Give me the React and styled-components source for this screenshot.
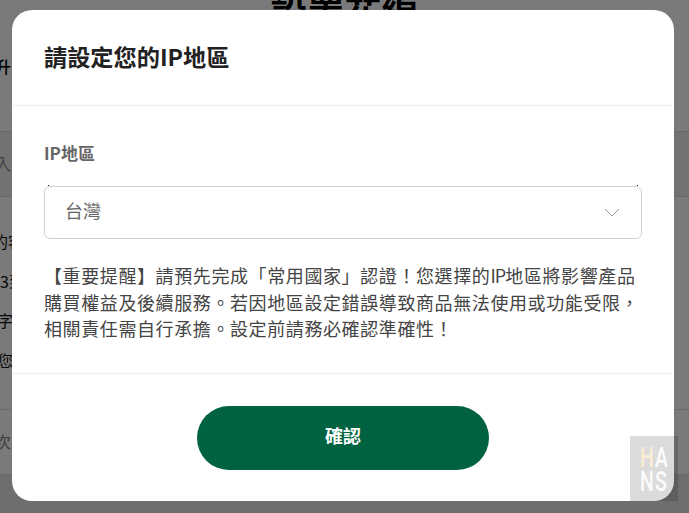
import React from 'react';
import styled, { createGlobalStyle } from 'styled-components';

const GlobalStyle = createGlobalStyle`
  html, body {
    margin: 0;
    padding: 0;
    background: #fff;
  }
  body {
    font-family: "Noto Sans CJK TC", "Liberation Sans", sans-serif;
  }
`;

const Screen = styled.div`
  position: relative;
  width: 689px;
  height: 513px;
  overflow: hidden;
`;

/* the settings page behind the dialog */
const PageBehind = styled.div`
  display: flex;
  flex-direction: column;
  background: #fff;
  height: 513px;
`;

const PageTitle = styled.h1`
  margin: -14px 0 0;
  height: 50px;
  font-size: 37px;
  line-height: 50px;
  font-weight: 700;
  text-align: center;
  color: #000;
`;

const PageHint = styled.div`
  margin-top: 17px;
  height: 26px;
  font-size: 16px;
  line-height: 26px;
  font-weight: 500;
  margin-left: ${(p) => p.$shift}px;
  color: #000;
`;

const PageField = styled.div`
  margin-top: ${(p) => p.$top}px;
  height: 64px;
  border-top: 1px solid #dcdcdc;
  border-bottom: 1px solid #dcdcdc;
  background: ${(p) => (p.$shade ? '#efefef' : '#fff')};
  font-size: 16px;
  line-height: 62px;
  color: #888;
  text-indent: -5px;
`;

const PageLines = styled.div`
  margin-top: 25px;
  display: flex;
  flex-direction: column;
`;

const PageLine = styled.div`
  height: 39.5px;
  font-size: 16px;
  line-height: 39.5px;
  margin-left: ${(p) => p.$shift}px;
  color: #111;
  white-space: nowrap;
`;

const PageEnd = styled.div`
  flex: 1;
  background: #e6e6e6;
`;

const Backdrop = styled.div`
  position: absolute;
  inset: 0;
  background: rgba(0, 0, 0, 0.52);
`;

const Modal = styled.div`
  position: absolute;
  left: 12px;
  top: 10px;
  width: 662px;
  height: 491px;
  display: flex;
  flex-direction: column;
  background: #fff;
  border-radius: 20px;
`;

const ModalHeader = styled.div`
  height: 96px;
  box-sizing: border-box;
  display: flex;
  align-items: center;
  padding: 0 32px 0;
  border-bottom: 1px solid #eeeeee;
  margin-right: 2px;
`;

const ModalTitle = styled.h2`
  margin: 0 0 4px;
  font-size: 23.2px;
  line-height: 30px;
  font-weight: 700;
  color: #222;
`;

const ModalBody = styled.div`
  height: 268px;
  box-sizing: border-box;
  padding: 35px 32px 0;
  border-bottom: 1px solid #eeeeee;
  margin-right: 2px;
`;

const FieldLabel = styled.div`
  font-size: 17px;
  line-height: 24px;
  font-weight: 700;
  color: #666;
`;

const SelectBox = styled.div`
  position: relative;
  margin-top: 21px;
  width: 598px;
  height: 53px;
  box-sizing: border-box;
  display: flex;
  align-items: center;
  justify-content: space-between;
  padding: 0 21px 0 20px;
  border: 1px solid #d0d0d0;
  border-radius: 6px;
  font-size: 18px;
  color: #666;

  &::before,
  &::after {
    content: '';
    position: absolute;
    top: -2px;
    width: 1px;
    height: 1px;
    background: #222;
  }
  &::before {
    left: 3px;
  }
  &::after {
    right: 3px;
  }
`;

const SelectValue = styled.span`
  margin-bottom: 5px;
`;

const Notice = styled.p`
  margin: 23px 0 0;
  width: 604px;
  font-size: 18px;
  line-height: 26.6px;
  letter-spacing: 0.6px;
  color: #444;
`;

const LatinRun = styled.span`
  letter-spacing: -0.9px;
`;

const ModalFooter = styled.div`
  flex: 1;
  display: flex;
  justify-content: center;
  padding-top: 32px;
`;

const ConfirmButton = styled.button`
  width: 292px;
  height: 64px;
  padding: 0 0 6px;
  border: none;
  border-radius: 32px;
  background: #006241;
  color: #fff;
  font-family: inherit;
  font-size: 18px;
  font-weight: 700;
`;

const Watermark = styled.div`
  position: absolute;
  left: 630px;
  top: 436px;
  width: 48px;
  height: 65px;
  box-sizing: border-box;
  padding: 10px 0 0 10px;
  display: grid;
  grid-template-columns: 15px 15px;
  grid-auto-rows: 24px;
  background: rgba(0, 0, 0, 0.14);
  font-family: Roboto, "Liberation Sans", sans-serif;
  font-size: 27px;
  font-weight: 500;
  line-height: 24px;
  color: rgba(255, 255, 255, 0.92);
`;

const WatermarkLetter = styled.span`
  display: inline-block;
  transform: scaleX(0.72);
  transform-origin: left center;
  color: ${(p) => p.$tint || 'inherit'};
`;

const Chevron = () => (
  <svg width="16" height="9" viewBox="0 0 16 9" fill="none">
    <path d="M1 1l7 7 7-7" stroke="#999" strokeWidth="1" />
  </svg>
);

const App = () => {
  return (
    <Screen>
      <GlobalStyle />
      <PageBehind>
        <PageTitle>設置花編</PageTitle>
        <PageHint $shift={-5}>升</PageHint>
        <PageField $top={52} $shade>入</PageField>
        <PageLines>
          <PageLine $shift={-8}>的客</PageLine>
          <PageLine $shift={0}>3到</PageLine>
          <PageLine $shift={-3}>字</PageLine>
          <PageLine $shift={-3}>您</PageLine>
        </PageLines>
        <PageField $top={29}>次</PageField>
        <PageEnd />
      </PageBehind>
      <Backdrop />
      <Modal>
        <ModalHeader>
          <ModalTitle>請設定您的IP地區</ModalTitle>
        </ModalHeader>
        <ModalBody>
          <FieldLabel>IP地區</FieldLabel>
          <SelectBox>
            <SelectValue>台灣</SelectValue>
            <Chevron />
          </SelectBox>
          <Notice>【重要提醒】請預先完成「常用國家」認證！您選擇的<LatinRun>IP</LatinRun>地區將影響產品購買權益及後續服務。若因地區設定錯誤導致商品無法使用或功能受限，相關責任需自行承擔。設定前請務必確認準確性！</Notice>
        </ModalBody>
        <ModalFooter>
          <ConfirmButton>確認</ConfirmButton>
        </ModalFooter>
      </Modal>
      <Watermark>
        <WatermarkLetter $tint="rgba(255, 240, 210, 0.9)">H</WatermarkLetter>
        <WatermarkLetter>A</WatermarkLetter>
        <WatermarkLetter>N</WatermarkLetter>
        <WatermarkLetter>S</WatermarkLetter>
      </Watermark>
    </Screen>
  );
};

export default App;
